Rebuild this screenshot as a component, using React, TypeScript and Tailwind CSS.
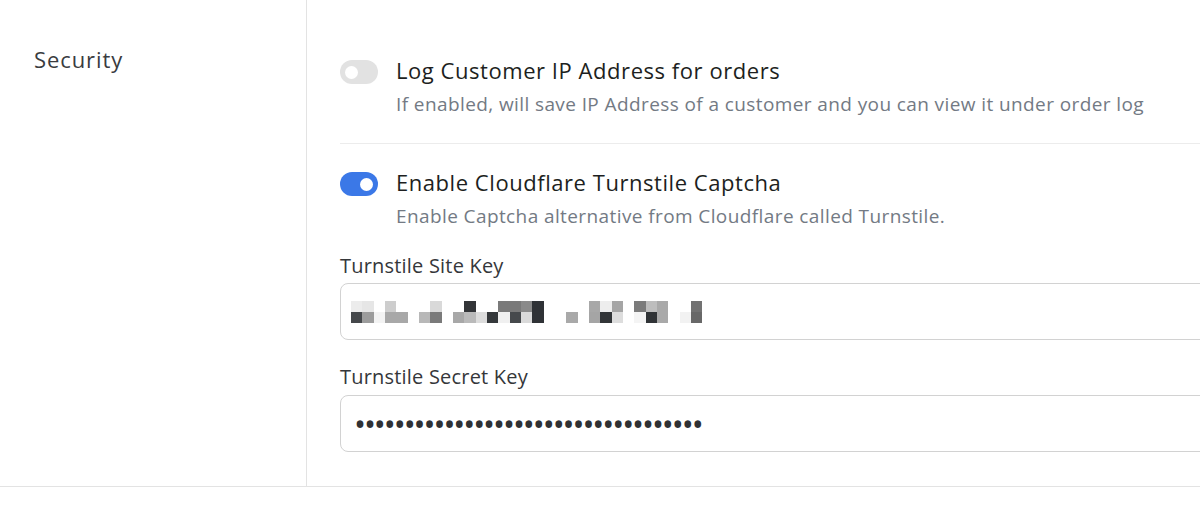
import { FC } from 'react';

const font = { fontFamily: '"Open Sans", "Liberation Sans", sans-serif' };

// pixelated (redacted) site key, two rows of blocks
const topRow = [
  'bg-[#ececec]', 'bg-[#e6e6e6]', 'bg-white', 'bg-[#cdcdcd]', 'bg-white', 'bg-white', 'bg-white', 'bg-[#d9d9d9]',
  'bg-white', 'bg-white', 'bg-[#333538]', 'bg-white', 'bg-white', 'bg-[#7a7a7a]', 'bg-[#7a7a7a]', 'bg-[#8a8a8a]',
  'bg-[#2f3236]', 'bg-white', 'bg-white', 'bg-white', 'bg-white', 'bg-[#a8a8a8]', 'bg-[#ededed]', 'bg-[#a5a5a5]',
  'bg-white', 'bg-[#7b7b7b]', 'bg-[#bdbdbd]', 'bg-[#a9a9a9]', 'bg-white', 'bg-white', 'bg-[#727272]',
];
const bottomRow = [
  'bg-[#45484b]', 'bg-[#9c9c9c]', 'bg-[#f3f3f3]', 'bg-[#a8a8a8]', 'bg-[#a8a8a8]', 'bg-white', 'bg-[#b8b8b8]', 'bg-[#7a7a7a]',
  'bg-white', 'bg-[#a8a8a8]', 'bg-[#bababa]', 'bg-[#dcdcdc]', 'bg-[#35383b]', 'bg-[#f0f0f0]', 'bg-[#46494c]', 'bg-[#dadada]',
  'bg-[#2f3236]', 'bg-white', 'bg-white', 'bg-[#a9a9a9]', 'bg-white', 'bg-[#a5a5a5]', 'bg-[#323538]', 'bg-[#dddddd]',
  'bg-white', 'bg-[#f4f4f4]', 'bg-[#303336]', 'bg-[#a9a9a9]', 'bg-white', 'bg-[#f2f2f2]', 'bg-[#686868]',
];

const Toggle: FC<{ on?: boolean }> = ({ on }) => (
  <div
    className={
      on
        ? 'mt-[3px] flex h-[24px] w-[38px] shrink-0 items-center justify-end rounded-full bg-[#3b78e7] pr-[5px]'
        : 'mt-[3px] flex h-[24px] w-[38px] shrink-0 items-center rounded-full bg-[#e2e2e2] pl-[5px]'
    }
  >
    <div className="h-[13px] w-[13px] rounded-full bg-white" />
  </div>
);

const Setting: FC<{ on?: boolean; title: string; desc: string }> = ({ on, title, desc }) => (
  <div className="flex gap-[18px]">
    <Toggle on={on} />
    <div>
      <div className="text-[22px] leading-[26px] tracking-[0.55px] text-[#1d1f21]">{title}</div>
      <div className="mt-[9px] text-[19px] leading-[24px] tracking-[0.4px] text-[#737a84]">{desc}</div>
    </div>
  </div>
);

const App: FC = () => {
  return (
    <div className="h-[522px] w-[1200px] overflow-hidden bg-white" style={font}>
      <div className="flex h-[487px] border-b border-[#e3e3e3]">
        {/* Section title */}
        <div className="w-[307px] shrink-0 border-r border-[#e3e3e3] pl-[34px] pt-[44px]">
          <h2 className="text-[22px] leading-[30px] tracking-[0.9px] text-[#3a3c3f]">Security</h2>
        </div>

        {/* Settings */}
        <div className="-mr-[40px] flex-1 pl-[33px] pt-[57px]">
          <div className="border-b border-[#ececec] pb-[27px]">
            <Setting
              title="Log Customer IP Address for orders"
              desc="If enabled, will save IP Address of a customer and you can view it under order log"
            />
          </div>

          <div className="pt-[25px]">
            <Setting
              on
              title="Enable Cloudflare Turnstile Captcha"
              desc="Enable Captcha alternative from Cloudflare called Turnstile."
            />
          </div>

          <label className="mt-[25px] block text-[20px] leading-[26px] tracking-[0.2px] text-[#35373a]">
            Turnstile Site Key
          </label>
          <div className="mt-[4px] flex h-[57px] flex-col justify-center rounded-lg border border-[#d2d2d2] pl-[10px]">
            <div className="flex">
              {topRow.map((c, i) => (
                <div key={i} className={`h-[11px] w-[11.33px] ${c}`} />
              ))}
            </div>
            <div className="flex">
              {bottomRow.map((c, i) => (
                <div key={i} className={`h-[11px] w-[11.33px] ${c}`} />
              ))}
            </div>
          </div>

          <label className="mt-[24px] block text-[20px] leading-[26px] tracking-[0.2px] text-[#35373a]">
            Turnstile Secret Key
          </label>
          <div className="mt-[5px] flex h-[57px] items-center rounded-lg border border-[#d2d2d2] pl-[13px]">
            <span className="text-[32px] leading-none tracking-[-2.1px] text-[#2f3134]">{'•'.repeat(35)}</span>
          </div>
        </div>
      </div>
    </div>
  );
};

export default App;
